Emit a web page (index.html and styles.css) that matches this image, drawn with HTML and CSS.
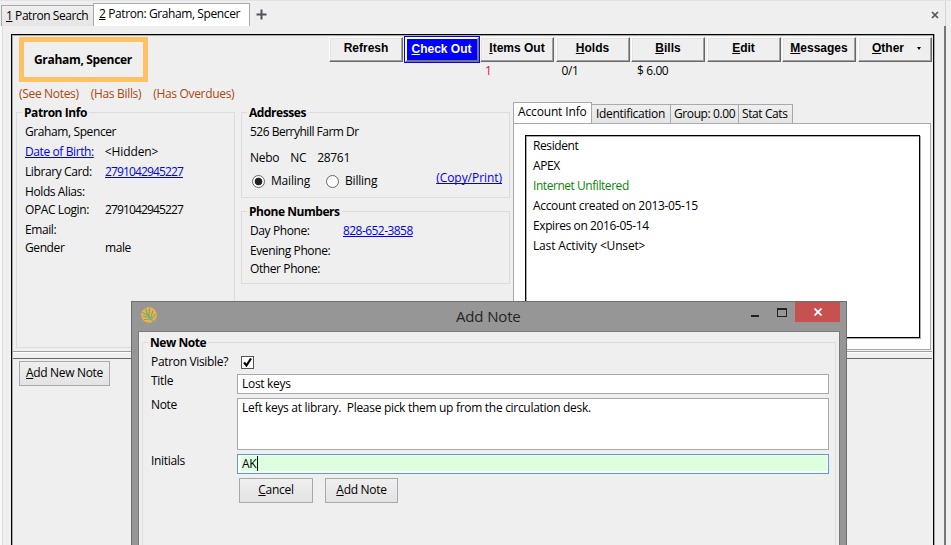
FILE: index.html
```html
<!DOCTYPE html>
<html lang="en">
<head>
<meta charset="utf-8">
<title>Patron: Graham, Spencer</title>
<link rel="stylesheet" href="styles.css">
</head>
<body>
<div class="window">
  <nav class="tabs">
    <div class="tab tab-back"><span><u>1</u> Patron Search</span></div>
    <div class="tab tab-front"><span><u>2</u> Patron: Graham, Spencer</span></div>
    <svg class="plus" width="11" height="11" viewBox="0 0 11 11"><path d="M5.5 0.5v10M0.5 5.5h10" stroke="#4a5563" stroke-width="2"/></svg>
    <svg class="tab-close" width="8" height="8" viewBox="0 0 8 8"><path d="M1 1l6 6M7 1l-6 6" stroke="#555" stroke-width="1.7"/></svg>
  </nav>
  <div class="body">
    <main class="frame">
      <section class="patron">
        <header class="top">
          <div class="identity">
            <div class="name"><span>Graham, Spencer</span></div>
            <div class="flags"><span>(See Notes)</span><span>(Has Bills)</span><span class="overdue">(Has Overdues)</span></div>
          </div>
          <div class="toolbar">
            <div class="tool"><button class="raised">Refresh</button></div>
            <div class="tool"><button class="raised active"><u>C</u>heck Out</button></div>
            <div class="tool"><button class="raised"><u>I</u>tems Out</button><span class="count red">1</span></div>
            <div class="tool"><button class="raised"><u>H</u>olds</button><span class="count">0/1</span></div>
            <div class="tool"><button class="raised"><u>B</u>ills</button><span class="count">$ 6.00</span></div>
            <div class="tool"><button class="raised"><u>E</u>dit</button></div>
            <div class="tool"><button class="raised"><u>M</u>essages</button></div>
            <div class="tool"><button class="raised other"><span><u>O</u>ther</span><i class="caret"></i></button></div>
          </div>
        </header>
        <div class="columns">
          <section class="group info">
            <h2><span>Patron Info</span></h2>
            <div class="rows">
              <div><span>Graham, Spencer</span></div>
              <div><a class="key">Date of Birth:</a><span class="hidden">&lt;Hidden&gt;</span></div>
              <div><span class="key">Library Card:</span><a class="num">2791042945227</a></div>
              <div><span class="key">Holds Alias:</span></div>
              <div><span class="key">OPAC Login:</span><span class="num">2791042945227</span></div>
              <div><span class="key">Email:</span></div>
              <div><span class="key">Gender</span><span>male</span></div>
            </div>
          </section>
          <div class="contact">
            <section class="group addresses">
              <h2><span>Addresses</span></h2>
              <div class="street"><span>526 Berryhill Farm Dr</span></div>
              <div class="city"><span>Nebo</span><span>NC</span><span>28761</span></div>
              <div class="choices">
                <i class="radio on"></i><span class="mailing">Mailing</span>
                <i class="radio"></i><span>Billing</span>
                <a class="copy">(Copy/Print)</a>
              </div>
            </section>
            <section class="group phones">
              <h2><span>Phone Numbers</span></h2>
              <div class="rows">
                <div><span class="key">Day Phone:</span><a class="phone">828-652-3858</a></div>
                <div><span class="key">Evening Phone:</span></div>
                <div><span class="key">Other Phone:</span></div>
              </div>
            </section>
          </div>
          <section class="account">
            <div class="subtabs">
              <div class="on"><span>Account Info</span></div>
              <div class="s2"><span>Identification</span></div>
              <div class="s3"><span>Group: 0.00</span></div>
              <div class="s4"><span>Stat Cats</span></div>
            </div>
            <div class="panel">
              <div class="list">
                <div>Resident</div><div>APEX</div><div class="green">Internet Unfiltered</div>
                <div class="created">Account created on 2013-05-15</div><div>Expires on 2016-05-14</div><div class="activity">Last Activity &lt;Unset&gt;</div>
              </div>
            </div>
          </section>
        </div>
      </section>
      <div class="splitter"></div>
      <section class="notes"><button class="flat add"><u>A</u>dd New Note</button></section>
    </main>
  </div>
</div>

<div class="dialog">
  <header class="titlebar">
    <svg class="logo" width="16" height="16" viewBox="0 0 16 16">
      <circle cx="8" cy="8" r="7.8" fill="#efb04a"/>
      <path d="M13 15C9 12 6 7 4.500 1.500M8 10.500L1.500 9M7 8.500L1.500 5.500M9.500 12L3 12.500M8 9.500L8.500 1.500M9.500 11.500L12 3.500M10.500 12.500L14.500 7" fill="none" stroke="#74ad76" stroke-width="1.200"/>
    </svg>
    <span class="caption">Add Note</span>
    <div class="controls">
      <i class="min"></i><i class="max"></i>
      <b class="close"><svg width="8" height="8" viewBox="0 0 8 8"><path d="M0.500 0.500l7 7M7.500 0.500l-7 7" stroke="#fff" stroke-width="1.800"/></svg></b>
    </div>
  </header>
  <div class="content">
    <section class="group form">
      <h2><span>New Note</span></h2>
      <div class="field visible"><label>Patron Visible?</label><i class="check"><svg width="11" height="11" viewBox="0 0 11 11"><path d="M2 5.500l2.500 3L9 1.500" fill="none" stroke="#000" stroke-width="2.200"/></svg></i></div>
      <div class="field title"><label>Title</label><div class="input"><span>Lost keys</span></div></div>
      <div class="field note"><label>Note</label><div class="input"><span>Left keys at library.&nbsp; Please pick them up from the circulation desk.</span></div></div>
      <div class="field initials"><label>Initials</label><div class="input focus"><span>AK</span></div></div>
      <div class="actions"><button class="flat cancel"><u>C</u>ancel</button><button class="flat save"><u>A</u>dd Note</button></div>
    </section>
  </div>
</div>
</body>
</html>
```
FILE: styles.css
```css
* { box-sizing: border-box; }
body {
  margin: 0; width: 951px; height: 545px; overflow: hidden; position: relative;
  background: #efefef; color: #000;
  font: 12px/16px "Open Sans", "Noto Sans", sans-serif; letter-spacing: -0.4px;
}
span, a, label { white-space: nowrap; }
u, a { text-decoration: underline; text-underline-offset: 1px; text-decoration-thickness: 1px; text-decoration-skip-ink: none; }
a { color: #0000ee; }
button { font: inherit; color: inherit; letter-spacing: inherit; padding: 0; margin: 0; border-radius: 0; white-space: nowrap; }
.window { height: 545px; display: flex; flex-direction: column; border-top: 1px solid #e3e3e3; }
.tabs { height: 25px; flex: none; display: flex; align-items: flex-end; padding-left: 1px; border-right: 1px solid #d5d5d5; width: 946px; }
.tab { border: 1px solid #a9a9ad; border-bottom: 0; padding-left: 4px; }
.tab-back { width: 92px; height: 21px; border-right: 0; line-height: 19px; letter-spacing: -0.44px; background: linear-gradient(#efefef, #e5e5e5); }
.tab-front { width: 157px; height: 23px; padding-left: 5px; line-height: 20px; background: #fff; }
.plus { margin: 0 0 6px 6px; }
.tab-close { margin: 0 6px 7px auto; }
.body { flex: 1; width: 946px; border-left: 2px solid #f8f8f8; border-right: 2px solid #777; box-shadow: inset 1px 0 #ddd; padding: 8px 9px 0 9px; }
.frame { width: 923px; height: 511px; border: 1px solid #000; border-bottom: 0; box-shadow: inset 1px 1px #aaa, 1px 0 #aaa; padding: 1px 1px 0; }
.patron { height: 315px; }
.top { height: 66px; display: flex; justify-content: space-between; }
.identity { padding: 1px 0 0 6px; }
.name { width: 129px; height: 45px; border: 5px solid #ffc164; padding-left: 10px; font: 700 12px/36px "Open Sans", sans-serif; letter-spacing: -0.32px; }
.flags { display: flex; gap: 12px; color: #a84812; padding-top: 4px; letter-spacing: -0.32px; }
.toolbar { display: flex; width: 604px; }
.tool { width: 75.500px; }
.raised { display: block; width: 74px; height: 25px; margin: 1px 0 0 1px; border: 1px solid; border-color: #fff #696969 #696969 #fff; box-shadow: inset -1px -1px #a0a0a0, inset 1px 1px #e3e3e3; background: #efefef; font: 700 12px/19px "Liberation Sans", sans-serif; letter-spacing: 0; padding-bottom: 2px; }
.active { background: #00f; color: #fff; outline: 1px solid #00f; border-width: 2px; border-color: #fff #777 #777 #fff; box-shadow: none; line-height: 18px; }
.other { display: flex; align-items: center; justify-content: center; gap: 13px; padding-left: 4px; }
.caret { border: 2.500px solid transparent; border-top: 3px solid #000; border-bottom: 0; }
.count { display: block; padding: 1px 0 0 7px; }
.red { color: #e6005c; padding-left: 6px; }
.columns { display: flex; }
.group { position: relative; border: 1px solid #dcdcdc; }
.group h2 { margin: -9px 0 0 5px; height: 17px; font: 700 12px/17px "Open Sans", sans-serif; letter-spacing: -0.45px; }
.group h2 span { background: #efefef; padding: 0 2px; }
.info { width: 219px; height: 236px; margin: 10px 0 0 3px; }
.rows > div { display: flex; height: 20px; line-height: 20px; padding-left: 8px; }
.info .rows { padding-top: 1px; }
.info .rows > div:nth-child(4), .info .rows > div:nth-child(6) { height: 18px; }
.info .key { width: 80px; flex: none; }
.info a.key { width: auto; margin-right: 11px; }
.hidden { letter-spacing: -0.1px; }
.num { letter-spacing: -0.86px; }
.phone { letter-spacing: -0.55px; }
.contact { margin: 10px 0 0 6px; width: 269px; }
.addresses { height: 86px; }
.street { padding: 3px 0 0 8px; height: 20px; letter-spacing: -0.5px; }
.city { padding: 9px 0 0 8px; display: flex; gap: 11px; letter-spacing: -0.3px; }
.choices { display: flex; align-items: center; height: 16px; margin-top: 7px; padding-left: 10px; letter-spacing: -0.2px; }
.radio { width: 13px; height: 13px; border: 1px solid #666; border-radius: 50%; background: #fff; margin-right: 6px; }
.radio.on { background: radial-gradient(circle, #222 3.500px, #fff 4.200px); }
.mailing { width: 55px; }
.copy { margin: -6px 7px 0 auto; letter-spacing: -0.05px; }
.phones { margin-top: 13px; height: 73px; }
.phones .rows { padding-top: 1px; }
.phones .rows > div:nth-child(2) { height: 18px; }
.phones .key { width: 93px; flex: none; }
.account { margin-left: 3px; width: 418px; }
.subtabs { display: flex; align-items: flex-end; height: 21px; }
.subtabs div { height: 19px; line-height: 18px; padding-left: 4px; border: 1px solid #a9a9ad; border-bottom: 0; border-left: 0; background: linear-gradient(#efefef, #e4e4e4); letter-spacing: -0.32px; }
.subtabs .on { width: 79px; height: 21px; background: #fff; border-left: 1px solid #a9a9ad; letter-spacing: -0.15px; }
.s2 { width: 79px; } .s3 { width: 68px; } .s4 { width: 54px; }
.subtabs .s3, .subtabs .s4 { padding-left: 3px; letter-spacing: -0.4px; }
.panel { height: 227px; border: 1px solid #a9a9ad; background: #fff; padding: 11px 10px 0 11px; }
.list { width: 395px; height: 203px; border: 1px solid #000; box-shadow: inset 1px 1px #aaa, 1px 1px #aaa; padding: 0 0 0 7px; line-height: 20px; }
.green { color: #0b860b; letter-spacing: -0.45px; }
.created { letter-spacing: -0.33px; }
.activity { letter-spacing: -0.16px; }
.splitter { height: 8px; border-top: 1px solid #a0a0a0; border-bottom: 1px solid #696969; box-shadow: inset 0 1px #fff; }
.notes { padding: 2px 0 0 6px; }
.flat { height: 25px; border: 1px solid #a9a9ad; background: linear-gradient(#efefef, #e3e3e3); line-height: 21px; padding-bottom: 2px; }
.add { width: 91px; letter-spacing: -0.33px; }
.dialog { position: absolute; left: 131px; top: 301px; width: 716px; height: 244px; background: #969696; border: 1px solid #6f6f6f; border-bottom: 0; padding: 0 6px; }
.titlebar { height: 29px; display: flex; align-items: flex-start; }
.logo { margin: 5px 0 0 3px; }
.caption { width: 66px; margin: 4px 0 0 299px; font-size: 15px; line-height: 21px; letter-spacing: -0.15px; color: #252525; }
.controls { display: flex; align-items: flex-start; margin-left: auto; }
.min { width: 8px; height: 2px; margin: 13px 18px 0 0; background: #222; }
.max { width: 10px; height: 9px; margin: 6px 8px 0 0; border: 1px solid #222; border-top-width: 2px; }
.close { width: 45px; height: 20px; background: #c75050; display: flex; align-items: center; justify-content: center; }
.content { height: 214px; border: 1px solid #7a7a7a; border-bottom: 0; background: #efefef; padding: 10px 3px 0; }
.form { height: 203px; border-bottom: 0; }
.field { display: flex; padding-left: 8px; }
.field label { width: 86px; flex: none; letter-spacing: -0.33px; }
.input { width: 592px; height: 20px; border: 1px solid #a9a9ad; background: #fff; padding-left: 4px; line-height: 18px; letter-spacing: -0.3px; }
.visible { height: 23px; padding-top: 3px; }
.check { width: 13px; height: 13px; border: 1px solid #555; background: #fff; margin: 2px 0 0 4px; display: flex; }
.title { height: 24px; } .title label { line-height: 14px; }
.note { height: 56px; } .note label { line-height: 14px; } .note .input { height: 52px; }
.initials { height: 24px; } .initials label { line-height: 14px; }
.focus { border-color: #569de5; padding: 1px 1px 2px 3px; }
.focus span { display: block; width: 586px; line-height: 15px; padding-left: 1px; background: linear-gradient(#000, #000) 16px 0/1px 15px no-repeat #dfd; }
.actions { display: flex; gap: 12px; padding-left: 96px; letter-spacing: -0.3px; }
.cancel { width: 74px; } .save { width: 73px; }
```
